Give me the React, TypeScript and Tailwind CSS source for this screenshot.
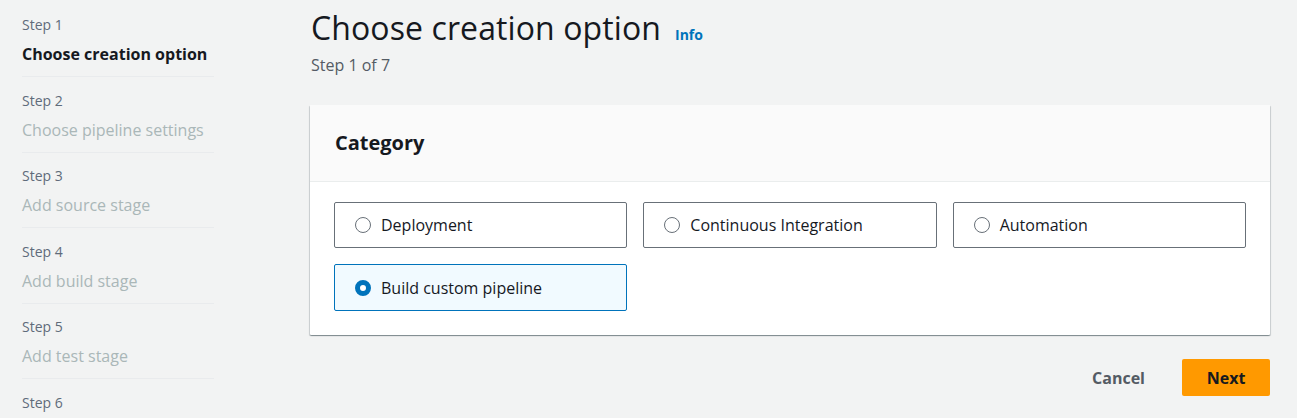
const steps = [
  "Choose creation option",
  "Choose pipeline settings",
  "Add source stage",
  "Add build stage",
  "Add test stage",
  "Add deploy stage",
];

const options = [
  { label: "Deployment", selected: false },
  { label: "Continuous Integration", selected: false },
  { label: "Automation", selected: false },
  { label: "Build custom pipeline", selected: true },
];

export default function App() {
  return (
    <div
      className="h-[418px] overflow-hidden bg-[#f2f3f3] flex text-[#16191f]"
      style={{ fontFamily: '"Open Sans", "Noto Sans", Arial, sans-serif' }}
    >
      <nav className="w-[192px] ml-[22px] pt-[15px] shrink-0">
        {steps.map((title, i) => (
          <div
            key={title}
            className={i < steps.length - 1 ? "border-b border-[#e9ebed] pb-[7px] mb-[13.5px]" : ""}
          >
            <div className="text-[14px] leading-[20px] text-[#5f6b7a]">Step {i + 1}</div>
            <div
              className={
                i === 0
                  ? "mt-[4px] text-[16px] leading-[30px] font-bold text-[#16191f]"
                  : "mt-[4px] text-[16px] leading-[30px] text-[#aab7b8]"
              }
            >
              {title}
            </div>
          </div>
        ))}
      </nav>

      <main className="flex-1 ml-[96px] mr-[27px] pt-[6px]">
        <div className="flex items-baseline gap-[14px] ml-[1px]">
          <h1 className="text-[32px] leading-[44px] font-normal tracking-[0.1px]">Choose creation option</h1>
          <a className="text-[14px] font-bold text-[#0073bb]">Info</a>
        </div>
        <div className="ml-[1px] mt-[4px] text-[16px] leading-[22px] text-[#545b64]">Step 1 of 7</div>

        <section className="mt-[29px] bg-white rounded-[1px] shadow-[0_1px_1px_0_rgba(0,28,36,0.3),1px_1px_1px_0_rgba(0,28,36,0.15),-1px_1px_1px_0_rgba(0,28,36,0.15)]">
          <header className="h-[77px] bg-[#fafafa] border-b border-[#eaeded] px-[25px] flex items-center">
            <h2 className="text-[20px] font-bold">Category</h2>
          </header>
          <div className="px-[24px] pt-[20px] pb-[24px] grid grid-cols-3 gap-x-[16px] gap-y-[16px]">
            {options.map((o) => (
              <label
                key={o.label}
                className={
                  o.selected
                    ? "h-[47px] rounded-[2px] border border-[#0073bb] bg-[#f1faff] flex items-center pl-[20px] gap-[10px]"
                    : "h-[46px] rounded-[2px] border border-[#687078] bg-white flex items-center pl-[20px] gap-[10px]"
                }
              >
                {o.selected ? (
                  <span className="w-[16px] h-[16px] rounded-full border-[5px] border-[#0073bb] bg-white shrink-0" />
                ) : (
                  <span className="w-[16px] h-[16px] rounded-full border-[1.5px] border-[#687078] bg-white shrink-0" />
                )}
                <span className="text-[16px]">{o.label}</span>
              </label>
            ))}
          </div>
        </section>

        <div className="flex justify-end items-center mt-[24px] gap-[37px]">
          <button className="text-[16px] font-bold text-[#545b64]">Cancel</button>
          <button className="w-[88px] h-[37px] rounded-[2px] bg-[#ff9900] text-[16px] font-bold text-[#16191f]">
            Next
          </button>
        </div>
      </main>
    </div>
  );
}
